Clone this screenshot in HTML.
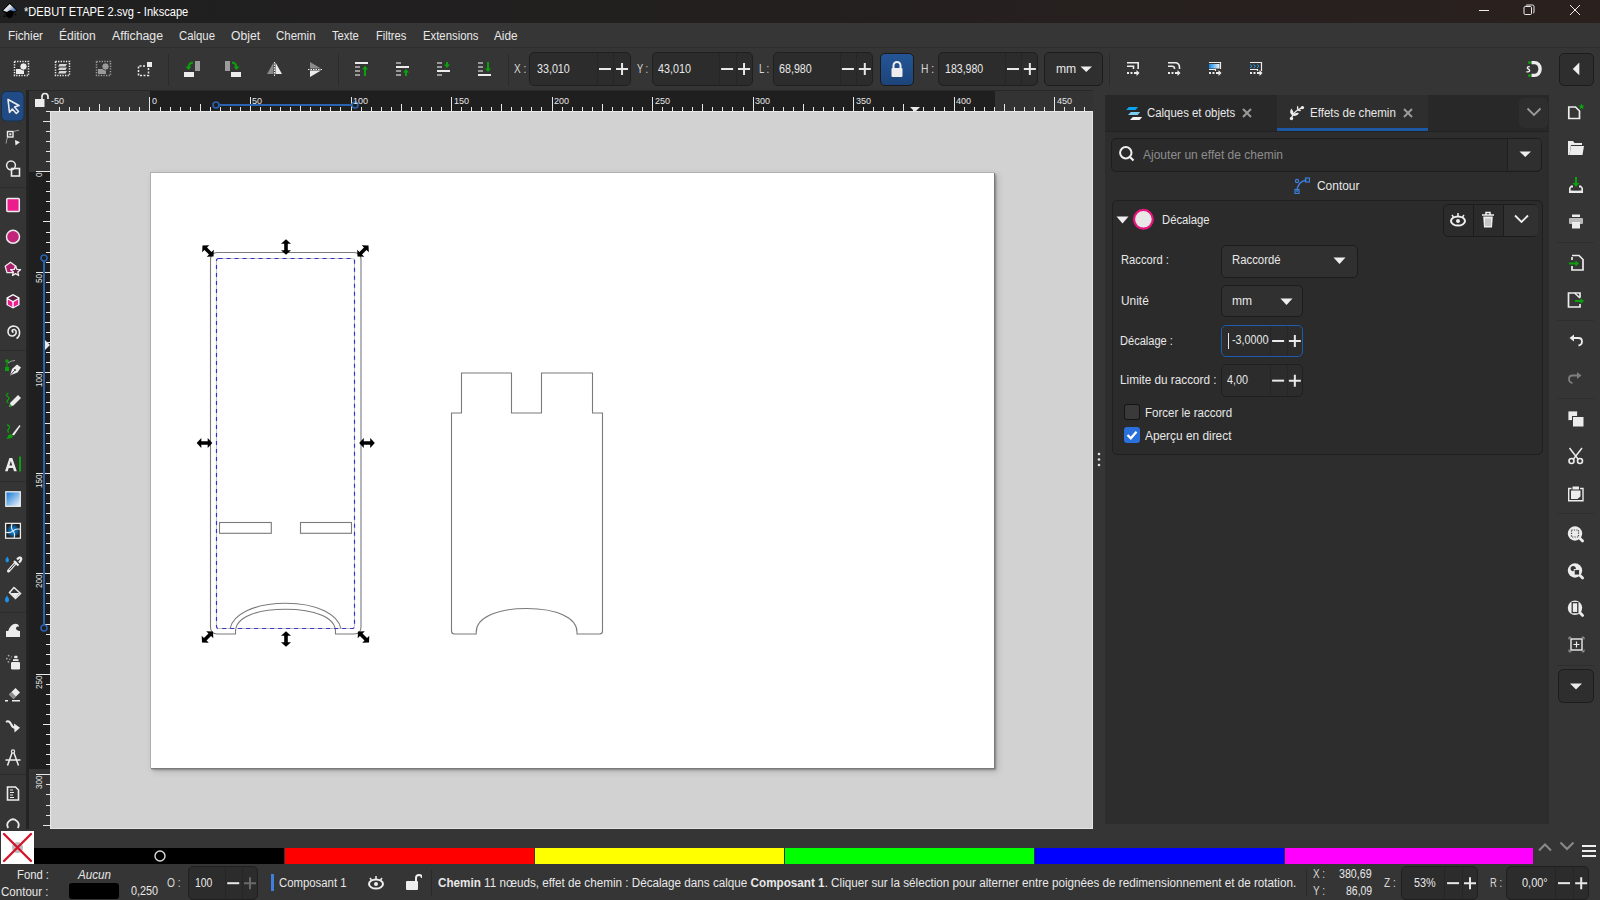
<!DOCTYPE html>
<html><head><meta charset="utf-8"><style>
html,body{margin:0;padding:0;}
body{width:1600px;height:900px;overflow:hidden;position:relative;background:#353535;font-family:"Liberation Sans",sans-serif;}
body>div{position:absolute;}
.t{position:absolute;white-space:pre;transform-origin:0 0;}
</style></head><body>
<div style="left:0px;top:0px;width:1600px;height:23px;background:linear-gradient(90deg,#202020 0%,#221f1f 40%,#2a211e 100%);"></div>
<div style="left:0px;top:23px;width:1600px;height:24px;background:#363636;"></div>
<div style="left:0px;top:47px;width:1600px;height:1px;background:#2e2e2e;"></div>
<div style="left:0px;top:48px;width:1600px;height:42px;background:#353535;"></div>
<div style="left:0px;top:90px;width:27px;height:738px;background:#353535;"></div>
<div style="left:26px;top:90px;width:3px;height:739px;background:#232323;"></div>
<div style="left:29px;top:90px;width:1064px;height:21px;background:#333333;"></div>
<div style="left:29px;top:111px;width:22px;height:718px;background:#333333;"></div>
<div style="left:150px;top:90px;width:845px;height:21px;background:#1f1f1f;"></div>
<div style="left:29px;top:172px;width:21px;height:597px;background:#1f1f1f;"></div>
<div style="left:29px;top:90px;width:1064px;height:1px;background:#282828;"></div>
<div style="left:51px;top:112px;width:1042px;height:717px;background:#d2d2d2;"></div>
<div style="left:51px;top:828px;width:1042px;height:1px;background:#e4e4e4;"></div>
<div style="left:1092px;top:112px;width:1px;height:717px;background:#e4e4e4;"></div>
<div style="left:1093px;top:90px;width:12px;height:738px;background:#353535;"></div>
<div style="left:1105px;top:95px;width:444px;height:729px;background:#2d2d2d;"></div>
<div style="left:1105px;top:95px;width:444px;height:36px;background:#282828;"></div>
<div style="left:1277px;top:95px;width:151px;height:36px;background:#2e2e2e;"></div>
<div style="left:1277px;top:128px;width:151px;height:3px;background:#1d58a5;"></div>
<div style="left:1105px;top:131px;width:444px;height:1px;background:#222222;"></div>
<div style="left:1549px;top:90px;width:51px;height:738px;background:#353535;"></div>
<div style="left:0px;top:829px;width:1600px;height:37px;background:#353535;"></div>
<div style="left:0px;top:866px;width:1600px;height:34px;background:#353535;"></div>
<div style="left:150px;top:172px;width:844px;height:596px;background:#fff;box-shadow:1px 1px 0 #7a7a7a, 2px 2px 2px rgba(0,0,0,0.3), 3px 3px 7px rgba(0,0,0,0.18);border-left:1px solid #b0b0b0;border-top:1px solid #b0b0b0;box-sizing:border-box"></div>
<svg style="position:absolute;left:0px;top:0px;" width="1100" height="830" viewBox="0 0 1100 830"><path d="M451.5 413 H461.5 V373 H511.5 V413 H541.5 V373 H592.5 V413 H602.5 V631 Q602.5 634 599.5 634 H577 V632 C577 618 557 608.5 526.6 608.5 C496 608.5 476.2 618 476.2 632 V634 H454.5 Q451.5 634 451.5 631 Z" fill="none" stroke="#7a7a7a" stroke-width="1.1"/><path d="M218 252.5 H353.5 Q361 252.5 361 260 V627 Q361 634 354 634 H335.5 V631.5 C335.5 617 314 609.3 285.5 609.3 C257 609.3 235.5 617 235.5 631.5 V634 H217.5 Q210.5 634 210.5 627 V260 Q210.5 252.5 218 252.5 Z" fill="none" stroke="#7a7a7a" stroke-width="1.1"/><rect x="216.5" y="258.5" width="138" height="370" rx="2" fill="none" stroke="#c4c4c4" stroke-width="1"/><path d="M230.1 628.5 C233 615 253 603.3 285.5 603.3 C318 603.3 338 615 340.9 628.5" fill="none" stroke="#7a7a7a" stroke-width="1.1"/><rect x="216.5" y="258.5" width="138" height="370" rx="2" fill="none" stroke="#3434c8" stroke-width="1.2" stroke-dasharray="4 4"/><rect x="219.5" y="522.5" width="51.8" height="10.8" fill="none" stroke="#7a7a7a" stroke-width="1.1"/><rect x="300.5" y="522.5" width="51" height="10.8" fill="none" stroke="#7a7a7a" stroke-width="1.1"/><path transform="translate(208 251) rotate(45)" d="M-7.8 0 L-3.2 -5 L-3.2 -1.8 L3.2 -1.8 L3.2 -5 L7.8 0 L3.2 5 L3.2 1.8 L-3.2 1.8 L-3.2 5 Z" fill="#000"/><path transform="translate(286 247) rotate(90)" d="M-7.8 0 L-3.2 -5 L-3.2 -1.8 L3.2 -1.8 L3.2 -5 L7.8 0 L3.2 5 L3.2 1.8 L-3.2 1.8 L-3.2 5 Z" fill="#000"/><path transform="translate(363 251) rotate(-45)" d="M-7.8 0 L-3.2 -5 L-3.2 -1.8 L3.2 -1.8 L3.2 -5 L7.8 0 L3.2 5 L3.2 1.8 L-3.2 1.8 L-3.2 5 Z" fill="#000"/><path transform="translate(204.5 443) rotate(0)" d="M-7.8 0 L-3.2 -5 L-3.2 -1.8 L3.2 -1.8 L3.2 -5 L7.8 0 L3.2 5 L3.2 1.8 L-3.2 1.8 L-3.2 5 Z" fill="#000"/><path transform="translate(367 443) rotate(0)" d="M-7.8 0 L-3.2 -5 L-3.2 -1.8 L3.2 -1.8 L3.2 -5 L7.8 0 L3.2 5 L3.2 1.8 L-3.2 1.8 L-3.2 5 Z" fill="#000"/><path transform="translate(207.5 637) rotate(-45)" d="M-7.8 0 L-3.2 -5 L-3.2 -1.8 L3.2 -1.8 L3.2 -5 L7.8 0 L3.2 5 L3.2 1.8 L-3.2 1.8 L-3.2 5 Z" fill="#000"/><path transform="translate(286 639) rotate(90)" d="M-7.8 0 L-3.2 -5 L-3.2 -1.8 L3.2 -1.8 L3.2 -5 L7.8 0 L3.2 5 L3.2 1.8 L-3.2 1.8 L-3.2 5 Z" fill="#000"/><path transform="translate(363.5 637) rotate(45)" d="M-7.8 0 L-3.2 -5 L-3.2 -1.8 L3.2 -1.8 L3.2 -5 L7.8 0 L3.2 5 L3.2 1.8 L-3.2 1.8 L-3.2 5 Z" fill="#000"/></svg>
<svg style="position:absolute;left:0px;top:0px;" width="1100" height="830" viewBox="0 0 1100 830"><line x1="59.5" y1="107" x2="59.5" y2="111.5" stroke="#e8e8e8" stroke-width="1"/><line x1="69.5" y1="107" x2="69.5" y2="111.5" stroke="#e8e8e8" stroke-width="1"/><line x1="79.5" y1="107" x2="79.5" y2="111.5" stroke="#e8e8e8" stroke-width="1"/><line x1="89.5" y1="107" x2="89.5" y2="111.5" stroke="#e8e8e8" stroke-width="1"/><line x1="99.5" y1="104" x2="99.5" y2="111.5" stroke="#e8e8e8" stroke-width="1"/><line x1="109.5" y1="107" x2="109.5" y2="111.5" stroke="#e8e8e8" stroke-width="1"/><line x1="119.5" y1="107" x2="119.5" y2="111.5" stroke="#e8e8e8" stroke-width="1"/><line x1="129.5" y1="107" x2="129.5" y2="111.5" stroke="#e8e8e8" stroke-width="1"/><line x1="139.5" y1="107" x2="139.5" y2="111.5" stroke="#e8e8e8" stroke-width="1"/><line x1="149.5" y1="97" x2="149.5" y2="111.5" stroke="#e8e8e8" stroke-width="1"/><line x1="160.5" y1="107" x2="160.5" y2="111.5" stroke="#e8e8e8" stroke-width="1"/><line x1="170.5" y1="107" x2="170.5" y2="111.5" stroke="#e8e8e8" stroke-width="1"/><line x1="180.5" y1="107" x2="180.5" y2="111.5" stroke="#e8e8e8" stroke-width="1"/><line x1="190.5" y1="107" x2="190.5" y2="111.5" stroke="#e8e8e8" stroke-width="1"/><line x1="200.5" y1="104" x2="200.5" y2="111.5" stroke="#e8e8e8" stroke-width="1"/><line x1="210.5" y1="107" x2="210.5" y2="111.5" stroke="#e8e8e8" stroke-width="1"/><line x1="220.5" y1="107" x2="220.5" y2="111.5" stroke="#e8e8e8" stroke-width="1"/><line x1="230.5" y1="107" x2="230.5" y2="111.5" stroke="#e8e8e8" stroke-width="1"/><line x1="240.5" y1="107" x2="240.5" y2="111.5" stroke="#e8e8e8" stroke-width="1"/><line x1="250.5" y1="97" x2="250.5" y2="111.5" stroke="#e8e8e8" stroke-width="1"/><line x1="260.5" y1="107" x2="260.5" y2="111.5" stroke="#e8e8e8" stroke-width="1"/><line x1="270.5" y1="107" x2="270.5" y2="111.5" stroke="#e8e8e8" stroke-width="1"/><line x1="280.5" y1="107" x2="280.5" y2="111.5" stroke="#e8e8e8" stroke-width="1"/><line x1="290.5" y1="107" x2="290.5" y2="111.5" stroke="#e8e8e8" stroke-width="1"/><line x1="300.5" y1="104" x2="300.5" y2="111.5" stroke="#e8e8e8" stroke-width="1"/><line x1="310.5" y1="107" x2="310.5" y2="111.5" stroke="#e8e8e8" stroke-width="1"/><line x1="320.5" y1="107" x2="320.5" y2="111.5" stroke="#e8e8e8" stroke-width="1"/><line x1="330.5" y1="107" x2="330.5" y2="111.5" stroke="#e8e8e8" stroke-width="1"/><line x1="340.5" y1="107" x2="340.5" y2="111.5" stroke="#e8e8e8" stroke-width="1"/><line x1="351.5" y1="97" x2="351.5" y2="111.5" stroke="#e8e8e8" stroke-width="1"/><line x1="361.5" y1="107" x2="361.5" y2="111.5" stroke="#e8e8e8" stroke-width="1"/><line x1="371.5" y1="107" x2="371.5" y2="111.5" stroke="#e8e8e8" stroke-width="1"/><line x1="381.5" y1="107" x2="381.5" y2="111.5" stroke="#e8e8e8" stroke-width="1"/><line x1="391.5" y1="107" x2="391.5" y2="111.5" stroke="#e8e8e8" stroke-width="1"/><line x1="401.5" y1="104" x2="401.5" y2="111.5" stroke="#e8e8e8" stroke-width="1"/><line x1="411.5" y1="107" x2="411.5" y2="111.5" stroke="#e8e8e8" stroke-width="1"/><line x1="421.5" y1="107" x2="421.5" y2="111.5" stroke="#e8e8e8" stroke-width="1"/><line x1="431.5" y1="107" x2="431.5" y2="111.5" stroke="#e8e8e8" stroke-width="1"/><line x1="441.5" y1="107" x2="441.5" y2="111.5" stroke="#e8e8e8" stroke-width="1"/><line x1="451.5" y1="97" x2="451.5" y2="111.5" stroke="#e8e8e8" stroke-width="1"/><line x1="461.5" y1="107" x2="461.5" y2="111.5" stroke="#e8e8e8" stroke-width="1"/><line x1="471.5" y1="107" x2="471.5" y2="111.5" stroke="#e8e8e8" stroke-width="1"/><line x1="481.5" y1="107" x2="481.5" y2="111.5" stroke="#e8e8e8" stroke-width="1"/><line x1="491.5" y1="107" x2="491.5" y2="111.5" stroke="#e8e8e8" stroke-width="1"/><line x1="501.5" y1="104" x2="501.5" y2="111.5" stroke="#e8e8e8" stroke-width="1"/><line x1="511.5" y1="107" x2="511.5" y2="111.5" stroke="#e8e8e8" stroke-width="1"/><line x1="521.5" y1="107" x2="521.5" y2="111.5" stroke="#e8e8e8" stroke-width="1"/><line x1="531.5" y1="107" x2="531.5" y2="111.5" stroke="#e8e8e8" stroke-width="1"/><line x1="541.5" y1="107" x2="541.5" y2="111.5" stroke="#e8e8e8" stroke-width="1"/><line x1="552.5" y1="97" x2="552.5" y2="111.5" stroke="#e8e8e8" stroke-width="1"/><line x1="562.5" y1="107" x2="562.5" y2="111.5" stroke="#e8e8e8" stroke-width="1"/><line x1="572.5" y1="107" x2="572.5" y2="111.5" stroke="#e8e8e8" stroke-width="1"/><line x1="582.5" y1="107" x2="582.5" y2="111.5" stroke="#e8e8e8" stroke-width="1"/><line x1="592.5" y1="107" x2="592.5" y2="111.5" stroke="#e8e8e8" stroke-width="1"/><line x1="602.5" y1="104" x2="602.5" y2="111.5" stroke="#e8e8e8" stroke-width="1"/><line x1="612.5" y1="107" x2="612.5" y2="111.5" stroke="#e8e8e8" stroke-width="1"/><line x1="622.5" y1="107" x2="622.5" y2="111.5" stroke="#e8e8e8" stroke-width="1"/><line x1="632.5" y1="107" x2="632.5" y2="111.5" stroke="#e8e8e8" stroke-width="1"/><line x1="642.5" y1="107" x2="642.5" y2="111.5" stroke="#e8e8e8" stroke-width="1"/><line x1="652.5" y1="97" x2="652.5" y2="111.5" stroke="#e8e8e8" stroke-width="1"/><line x1="662.5" y1="107" x2="662.5" y2="111.5" stroke="#e8e8e8" stroke-width="1"/><line x1="672.5" y1="107" x2="672.5" y2="111.5" stroke="#e8e8e8" stroke-width="1"/><line x1="682.5" y1="107" x2="682.5" y2="111.5" stroke="#e8e8e8" stroke-width="1"/><line x1="692.5" y1="107" x2="692.5" y2="111.5" stroke="#e8e8e8" stroke-width="1"/><line x1="702.5" y1="104" x2="702.5" y2="111.5" stroke="#e8e8e8" stroke-width="1"/><line x1="712.5" y1="107" x2="712.5" y2="111.5" stroke="#e8e8e8" stroke-width="1"/><line x1="722.5" y1="107" x2="722.5" y2="111.5" stroke="#e8e8e8" stroke-width="1"/><line x1="732.5" y1="107" x2="732.5" y2="111.5" stroke="#e8e8e8" stroke-width="1"/><line x1="743.5" y1="107" x2="743.5" y2="111.5" stroke="#e8e8e8" stroke-width="1"/><line x1="753.5" y1="97" x2="753.5" y2="111.5" stroke="#e8e8e8" stroke-width="1"/><line x1="763.5" y1="107" x2="763.5" y2="111.5" stroke="#e8e8e8" stroke-width="1"/><line x1="773.5" y1="107" x2="773.5" y2="111.5" stroke="#e8e8e8" stroke-width="1"/><line x1="783.5" y1="107" x2="783.5" y2="111.5" stroke="#e8e8e8" stroke-width="1"/><line x1="793.5" y1="107" x2="793.5" y2="111.5" stroke="#e8e8e8" stroke-width="1"/><line x1="803.5" y1="104" x2="803.5" y2="111.5" stroke="#e8e8e8" stroke-width="1"/><line x1="813.5" y1="107" x2="813.5" y2="111.5" stroke="#e8e8e8" stroke-width="1"/><line x1="823.5" y1="107" x2="823.5" y2="111.5" stroke="#e8e8e8" stroke-width="1"/><line x1="833.5" y1="107" x2="833.5" y2="111.5" stroke="#e8e8e8" stroke-width="1"/><line x1="843.5" y1="107" x2="843.5" y2="111.5" stroke="#e8e8e8" stroke-width="1"/><line x1="853.5" y1="97" x2="853.5" y2="111.5" stroke="#e8e8e8" stroke-width="1"/><line x1="863.5" y1="107" x2="863.5" y2="111.5" stroke="#e8e8e8" stroke-width="1"/><line x1="873.5" y1="107" x2="873.5" y2="111.5" stroke="#e8e8e8" stroke-width="1"/><line x1="883.5" y1="107" x2="883.5" y2="111.5" stroke="#e8e8e8" stroke-width="1"/><line x1="893.5" y1="107" x2="893.5" y2="111.5" stroke="#e8e8e8" stroke-width="1"/><line x1="903.5" y1="104" x2="903.5" y2="111.5" stroke="#e8e8e8" stroke-width="1"/><line x1="913.5" y1="107" x2="913.5" y2="111.5" stroke="#e8e8e8" stroke-width="1"/><line x1="923.5" y1="107" x2="923.5" y2="111.5" stroke="#e8e8e8" stroke-width="1"/><line x1="934.5" y1="107" x2="934.5" y2="111.5" stroke="#e8e8e8" stroke-width="1"/><line x1="944.5" y1="107" x2="944.5" y2="111.5" stroke="#e8e8e8" stroke-width="1"/><line x1="954.5" y1="97" x2="954.5" y2="111.5" stroke="#e8e8e8" stroke-width="1"/><line x1="964.5" y1="107" x2="964.5" y2="111.5" stroke="#e8e8e8" stroke-width="1"/><line x1="974.5" y1="107" x2="974.5" y2="111.5" stroke="#e8e8e8" stroke-width="1"/><line x1="984.5" y1="107" x2="984.5" y2="111.5" stroke="#e8e8e8" stroke-width="1"/><line x1="994.5" y1="107" x2="994.5" y2="111.5" stroke="#e8e8e8" stroke-width="1"/><line x1="1004.5" y1="104" x2="1004.5" y2="111.5" stroke="#e8e8e8" stroke-width="1"/><line x1="1014.5" y1="107" x2="1014.5" y2="111.5" stroke="#e8e8e8" stroke-width="1"/><line x1="1024.5" y1="107" x2="1024.5" y2="111.5" stroke="#e8e8e8" stroke-width="1"/><line x1="1034.5" y1="107" x2="1034.5" y2="111.5" stroke="#e8e8e8" stroke-width="1"/><line x1="1044.5" y1="107" x2="1044.5" y2="111.5" stroke="#e8e8e8" stroke-width="1"/><line x1="1054.5" y1="97" x2="1054.5" y2="111.5" stroke="#e8e8e8" stroke-width="1"/><line x1="1064.5" y1="107" x2="1064.5" y2="111.5" stroke="#e8e8e8" stroke-width="1"/><line x1="1074.5" y1="107" x2="1074.5" y2="111.5" stroke="#e8e8e8" stroke-width="1"/><line x1="1084.5" y1="107" x2="1084.5" y2="111.5" stroke="#e8e8e8" stroke-width="1"/><line x1="50" y1="111.5" x2="1093" y2="111.5" stroke="#e8e8e8" stroke-width="1"/><line x1="46" y1="111.5" x2="51" y2="111.5" stroke="#e8e8e8" stroke-width="1"/><line x1="43" y1="121.5" x2="51" y2="121.5" stroke="#e8e8e8" stroke-width="1"/><line x1="46" y1="131.5" x2="51" y2="131.5" stroke="#e8e8e8" stroke-width="1"/><line x1="46" y1="141.5" x2="51" y2="141.5" stroke="#e8e8e8" stroke-width="1"/><line x1="46" y1="151.5" x2="51" y2="151.5" stroke="#e8e8e8" stroke-width="1"/><line x1="46" y1="161.5" x2="51" y2="161.5" stroke="#e8e8e8" stroke-width="1"/><line x1="36" y1="171.5" x2="51" y2="171.5" stroke="#e8e8e8" stroke-width="1"/><line x1="46" y1="181.5" x2="51" y2="181.5" stroke="#e8e8e8" stroke-width="1"/><line x1="46" y1="191.5" x2="51" y2="191.5" stroke="#e8e8e8" stroke-width="1"/><line x1="46" y1="201.5" x2="51" y2="201.5" stroke="#e8e8e8" stroke-width="1"/><line x1="46" y1="211.5" x2="51" y2="211.5" stroke="#e8e8e8" stroke-width="1"/><line x1="43" y1="221.5" x2="51" y2="221.5" stroke="#e8e8e8" stroke-width="1"/><line x1="46" y1="232.5" x2="51" y2="232.5" stroke="#e8e8e8" stroke-width="1"/><line x1="46" y1="242.5" x2="51" y2="242.5" stroke="#e8e8e8" stroke-width="1"/><line x1="46" y1="252.5" x2="51" y2="252.5" stroke="#e8e8e8" stroke-width="1"/><line x1="46" y1="262.5" x2="51" y2="262.5" stroke="#e8e8e8" stroke-width="1"/><line x1="36" y1="272.5" x2="51" y2="272.5" stroke="#e8e8e8" stroke-width="1"/><line x1="46" y1="282.5" x2="51" y2="282.5" stroke="#e8e8e8" stroke-width="1"/><line x1="46" y1="292.5" x2="51" y2="292.5" stroke="#e8e8e8" stroke-width="1"/><line x1="46" y1="302.5" x2="51" y2="302.5" stroke="#e8e8e8" stroke-width="1"/><line x1="46" y1="312.5" x2="51" y2="312.5" stroke="#e8e8e8" stroke-width="1"/><line x1="43" y1="322.5" x2="51" y2="322.5" stroke="#e8e8e8" stroke-width="1"/><line x1="46" y1="332.5" x2="51" y2="332.5" stroke="#e8e8e8" stroke-width="1"/><line x1="46" y1="342.5" x2="51" y2="342.5" stroke="#e8e8e8" stroke-width="1"/><line x1="46" y1="352.5" x2="51" y2="352.5" stroke="#e8e8e8" stroke-width="1"/><line x1="46" y1="362.5" x2="51" y2="362.5" stroke="#e8e8e8" stroke-width="1"/><line x1="36" y1="372.5" x2="51" y2="372.5" stroke="#e8e8e8" stroke-width="1"/><line x1="46" y1="382.5" x2="51" y2="382.5" stroke="#e8e8e8" stroke-width="1"/><line x1="46" y1="392.5" x2="51" y2="392.5" stroke="#e8e8e8" stroke-width="1"/><line x1="46" y1="402.5" x2="51" y2="402.5" stroke="#e8e8e8" stroke-width="1"/><line x1="46" y1="412.5" x2="51" y2="412.5" stroke="#e8e8e8" stroke-width="1"/><line x1="43" y1="423.5" x2="51" y2="423.5" stroke="#e8e8e8" stroke-width="1"/><line x1="46" y1="433.5" x2="51" y2="433.5" stroke="#e8e8e8" stroke-width="1"/><line x1="46" y1="443.5" x2="51" y2="443.5" stroke="#e8e8e8" stroke-width="1"/><line x1="46" y1="453.5" x2="51" y2="453.5" stroke="#e8e8e8" stroke-width="1"/><line x1="46" y1="463.5" x2="51" y2="463.5" stroke="#e8e8e8" stroke-width="1"/><line x1="36" y1="473.5" x2="51" y2="473.5" stroke="#e8e8e8" stroke-width="1"/><line x1="46" y1="483.5" x2="51" y2="483.5" stroke="#e8e8e8" stroke-width="1"/><line x1="46" y1="493.5" x2="51" y2="493.5" stroke="#e8e8e8" stroke-width="1"/><line x1="46" y1="503.5" x2="51" y2="503.5" stroke="#e8e8e8" stroke-width="1"/><line x1="46" y1="513.5" x2="51" y2="513.5" stroke="#e8e8e8" stroke-width="1"/><line x1="43" y1="523.5" x2="51" y2="523.5" stroke="#e8e8e8" stroke-width="1"/><line x1="46" y1="533.5" x2="51" y2="533.5" stroke="#e8e8e8" stroke-width="1"/><line x1="46" y1="543.5" x2="51" y2="543.5" stroke="#e8e8e8" stroke-width="1"/><line x1="46" y1="553.5" x2="51" y2="553.5" stroke="#e8e8e8" stroke-width="1"/><line x1="46" y1="563.5" x2="51" y2="563.5" stroke="#e8e8e8" stroke-width="1"/><line x1="36" y1="573.5" x2="51" y2="573.5" stroke="#e8e8e8" stroke-width="1"/><line x1="46" y1="583.5" x2="51" y2="583.5" stroke="#e8e8e8" stroke-width="1"/><line x1="46" y1="593.5" x2="51" y2="593.5" stroke="#e8e8e8" stroke-width="1"/><line x1="46" y1="603.5" x2="51" y2="603.5" stroke="#e8e8e8" stroke-width="1"/><line x1="46" y1="614.5" x2="51" y2="614.5" stroke="#e8e8e8" stroke-width="1"/><line x1="43" y1="624.5" x2="51" y2="624.5" stroke="#e8e8e8" stroke-width="1"/><line x1="46" y1="634.5" x2="51" y2="634.5" stroke="#e8e8e8" stroke-width="1"/><line x1="46" y1="644.5" x2="51" y2="644.5" stroke="#e8e8e8" stroke-width="1"/><line x1="46" y1="654.5" x2="51" y2="654.5" stroke="#e8e8e8" stroke-width="1"/><line x1="46" y1="664.5" x2="51" y2="664.5" stroke="#e8e8e8" stroke-width="1"/><line x1="36" y1="674.5" x2="51" y2="674.5" stroke="#e8e8e8" stroke-width="1"/><line x1="46" y1="684.5" x2="51" y2="684.5" stroke="#e8e8e8" stroke-width="1"/><line x1="46" y1="694.5" x2="51" y2="694.5" stroke="#e8e8e8" stroke-width="1"/><line x1="46" y1="704.5" x2="51" y2="704.5" stroke="#e8e8e8" stroke-width="1"/><line x1="46" y1="714.5" x2="51" y2="714.5" stroke="#e8e8e8" stroke-width="1"/><line x1="43" y1="724.5" x2="51" y2="724.5" stroke="#e8e8e8" stroke-width="1"/><line x1="46" y1="734.5" x2="51" y2="734.5" stroke="#e8e8e8" stroke-width="1"/><line x1="46" y1="744.5" x2="51" y2="744.5" stroke="#e8e8e8" stroke-width="1"/><line x1="46" y1="754.5" x2="51" y2="754.5" stroke="#e8e8e8" stroke-width="1"/><line x1="46" y1="764.5" x2="51" y2="764.5" stroke="#e8e8e8" stroke-width="1"/><line x1="36" y1="774.5" x2="51" y2="774.5" stroke="#e8e8e8" stroke-width="1"/><line x1="46" y1="784.5" x2="51" y2="784.5" stroke="#e8e8e8" stroke-width="1"/><line x1="46" y1="794.5" x2="51" y2="794.5" stroke="#e8e8e8" stroke-width="1"/><line x1="46" y1="805.5" x2="51" y2="805.5" stroke="#e8e8e8" stroke-width="1"/><line x1="46" y1="815.5" x2="51" y2="815.5" stroke="#e8e8e8" stroke-width="1"/><line x1="43" y1="825.5" x2="51" y2="825.5" stroke="#e8e8e8" stroke-width="1"/><line x1="50.5" y1="111" x2="50.5" y2="829" stroke="#e8e8e8" stroke-width="1"/><line x1="216" y1="105" x2="355" y2="105" stroke="#2a62b0" stroke-width="2"/><circle cx="216" cy="105" r="3" fill="#1f1f1f" stroke="#2a62b0" stroke-width="1.6"/><circle cx="355" cy="105" r="3" fill="#1f1f1f" stroke="#2a62b0" stroke-width="1.6"/><line x1="44" y1="258" x2="44" y2="628" stroke="#2a62b0" stroke-width="2"/><circle cx="44" cy="258" r="3" fill="#1f1f1f" stroke="#2a62b0" stroke-width="1.6"/><circle cx="44" cy="628" r="3" fill="#1f1f1f" stroke="#2a62b0" stroke-width="1.6"/><path d="M910 107 H920 L916 111 V112 H914 V111 Z" fill="#e8e8e8"/><path d="M45 340 V350 L50 345 Z" fill="#e8e8e8"/></svg>
<div class="t" style="left:51.42px;top:96px;font-size:9.5px;line-height:9.5px;color:#e6e6e6;transform:scaleX(0.95)">-50</div>
<div class="t" style="left:151.95px;top:96px;font-size:9.5px;line-height:9.5px;color:#e6e6e6;transform:scaleX(0.95)">0</div>
<div class="t" style="left:252.47px;top:96px;font-size:9.5px;line-height:9.5px;color:#e6e6e6;transform:scaleX(0.95)">50</div>
<div class="t" style="left:353.00px;top:96px;font-size:9.5px;line-height:9.5px;color:#e6e6e6;transform:scaleX(0.95)">100</div>
<div class="t" style="left:453.52px;top:96px;font-size:9.5px;line-height:9.5px;color:#e6e6e6;transform:scaleX(0.95)">150</div>
<div class="t" style="left:554.05px;top:96px;font-size:9.5px;line-height:9.5px;color:#e6e6e6;transform:scaleX(0.95)">200</div>
<div class="t" style="left:654.58px;top:96px;font-size:9.5px;line-height:9.5px;color:#e6e6e6;transform:scaleX(0.95)">250</div>
<div class="t" style="left:755.10px;top:96px;font-size:9.5px;line-height:9.5px;color:#e6e6e6;transform:scaleX(0.95)">300</div>
<div class="t" style="left:855.62px;top:96px;font-size:9.5px;line-height:9.5px;color:#e6e6e6;transform:scaleX(0.95)">350</div>
<div class="t" style="left:956.15px;top:96px;font-size:9.5px;line-height:9.5px;color:#e6e6e6;transform:scaleX(0.95)">400</div>
<div class="t" style="left:1056.67px;top:96px;font-size:9.5px;line-height:9.5px;color:#e6e6e6;transform:scaleX(0.95)">450</div>
<div class="t" style="left:33.5px;top:177.49px;font-size:9.5px;line-height:9.5px;color:#e6e6e6;transform-origin:0 0;transform:rotate(-90deg) scaleX(0.85)">0</div>
<div class="t" style="left:33.5px;top:282.98px;font-size:9.5px;line-height:9.5px;color:#e6e6e6;transform-origin:0 0;transform:rotate(-90deg) scaleX(0.85)">50</div>
<div class="t" style="left:33.5px;top:387.47px;font-size:9.5px;line-height:9.5px;color:#e6e6e6;transform-origin:0 0;transform:rotate(-90deg) scaleX(0.85)">100</div>
<div class="t" style="left:33.5px;top:488.47px;font-size:9.5px;line-height:9.5px;color:#e6e6e6;transform-origin:0 0;transform:rotate(-90deg) scaleX(0.85)">150</div>
<div class="t" style="left:33.5px;top:588.47px;font-size:9.5px;line-height:9.5px;color:#e6e6e6;transform-origin:0 0;transform:rotate(-90deg) scaleX(0.85)">200</div>
<div class="t" style="left:33.5px;top:689.47px;font-size:9.5px;line-height:9.5px;color:#e6e6e6;transform-origin:0 0;transform:rotate(-90deg) scaleX(0.85)">250</div>
<div class="t" style="left:33.5px;top:789.47px;font-size:9.5px;line-height:9.5px;color:#e6e6e6;transform-origin:0 0;transform:rotate(-90deg) scaleX(0.85)">300</div>
<div class="t" style="left:23.75px;top:6px;font-size:12px;line-height:12px;color:#ffffff;transform:scaleX(0.9248);">*DEBUT ETAPE 2.svg - Inkscape</div>
<div class="t" style="left:8.00px;top:30px;font-size:12.5px;line-height:12.5px;color:#e8e8e8;transform:scaleX(0.9333);">Fichier</div>
<div class="t" style="left:59.00px;top:30px;font-size:12.5px;line-height:12.5px;color:#e8e8e8;transform:scaleX(0.9608);">Édition</div>
<div class="t" style="left:112.00px;top:30px;font-size:12.5px;line-height:12.5px;color:#e8e8e8;transform:scaleX(0.9831);">Affichage</div>
<div class="t" style="left:179.00px;top:30px;font-size:12.5px;line-height:12.5px;color:#e8e8e8;transform:scaleX(0.9085);">Calque</div>
<div class="t" style="left:231.00px;top:30px;font-size:12.5px;line-height:12.5px;color:#e8e8e8;transform:scaleX(0.9707);">Objet</div>
<div class="t" style="left:276.00px;top:30px;font-size:12.5px;line-height:12.5px;color:#e8e8e8;transform:scaleX(0.9173);">Chemin</div>
<div class="t" style="left:332.40px;top:30px;font-size:12.5px;line-height:12.5px;color:#e8e8e8;transform:scaleX(0.8971);">Texte</div>
<div class="t" style="left:375.70px;top:30px;font-size:12.5px;line-height:12.5px;color:#e8e8e8;transform:scaleX(0.8912);">Filtres</div>
<div class="t" style="left:422.50px;top:30px;font-size:12.5px;line-height:12.5px;color:#e8e8e8;transform:scaleX(0.9063);">Extensions</div>
<div class="t" style="left:494.40px;top:30px;font-size:12.5px;line-height:12.5px;color:#e8e8e8;transform:scaleX(0.9440);">Aide</div>
<div style="left:529.4px;top:52px;width:101.30000000000007px;height:34px;background:#2c2c2c;border:1px solid #1f1f1f;border-radius:5px;box-sizing:border-box"></div>
<div style="left:596.6px;top:53px;width:1px;height:32px;background:#262626;"></div>
<div style="left:613.4px;top:53px;width:1px;height:32px;background:#262626;"></div>
<svg style="position:absolute;left:0;top:0" width="1600" height="900"><path d="M599.0 69.0 H611.0" stroke="#e8e8e8" stroke-width="2"/><path d="M616.05 69.0 H628.05 M622.05 63.0 V75.0" stroke="#e8e8e8" stroke-width="2"/></svg>
<div style="left:651.5px;top:52px;width:101.10000000000002px;height:34px;background:#2c2c2c;border:1px solid #1f1f1f;border-radius:5px;box-sizing:border-box"></div>
<div style="left:718.7px;top:53px;width:1px;height:32px;background:#262626;"></div>
<div style="left:735.5px;top:53px;width:1px;height:32px;background:#262626;"></div>
<svg style="position:absolute;left:0;top:0" width="1600" height="900"><path d="M721.1 69.0 H733.1" stroke="#e8e8e8" stroke-width="2"/><path d="M738.05 69.0 H750.05 M744.05 63.0 V75.0" stroke="#e8e8e8" stroke-width="2"/></svg>
<div style="left:772.5px;top:52px;width:100.79999999999995px;height:34px;background:#2c2c2c;border:1px solid #1f1f1f;border-radius:5px;box-sizing:border-box"></div>
<div style="left:839.5px;top:53px;width:1px;height:32px;background:#262626;"></div>
<div style="left:856.3px;top:53px;width:1px;height:32px;background:#262626;"></div>
<svg style="position:absolute;left:0;top:0" width="1600" height="900"><path d="M841.9 69.0 H853.9" stroke="#e8e8e8" stroke-width="2"/><path d="M858.8 69.0 H870.8 M864.8 63.0 V75.0" stroke="#e8e8e8" stroke-width="2"/></svg>
<div style="left:937.6px;top:52px;width:100.69999999999993px;height:34px;background:#2c2c2c;border:1px solid #1f1f1f;border-radius:5px;box-sizing:border-box"></div>
<div style="left:1004.6px;top:53px;width:1px;height:32px;background:#262626;"></div>
<div style="left:1021.4px;top:53px;width:1px;height:32px;background:#262626;"></div>
<svg style="position:absolute;left:0;top:0" width="1600" height="900"><path d="M1007.0 69.0 H1019.0" stroke="#e8e8e8" stroke-width="2"/><path d="M1023.8499999999999 69.0 H1035.85 M1029.85 63.0 V75.0" stroke="#e8e8e8" stroke-width="2"/></svg>
<div class="t" style="left:514.00px;top:63px;font-size:12.5px;line-height:12.5px;color:#d8d8d8;transform:scaleX(0.8000);">X :</div>
<div class="t" style="left:536.60px;top:63px;font-size:12.5px;line-height:12.5px;color:#e8e8e8;transform:scaleX(0.8575);">33,010</div>
<div class="t" style="left:636.90px;top:63px;font-size:12.5px;line-height:12.5px;color:#d8d8d8;transform:scaleX(0.7369);">Y :</div>
<div class="t" style="left:658.00px;top:63px;font-size:12.5px;line-height:12.5px;color:#e8e8e8;transform:scaleX(0.8601);">43,010</div>
<div class="t" style="left:758.75px;top:63px;font-size:12.5px;line-height:12.5px;color:#d8d8d8;transform:scaleX(0.7628);">L :</div>
<div class="t" style="left:779.25px;top:63px;font-size:12.5px;line-height:12.5px;color:#e8e8e8;transform:scaleX(0.8562);">68,980</div>
<div class="t" style="left:920.80px;top:63px;font-size:12.5px;line-height:12.5px;color:#d8d8d8;transform:scaleX(0.8250);">H :</div>
<div class="t" style="left:944.90px;top:63px;font-size:12.5px;line-height:12.5px;color:#e8e8e8;transform:scaleX(0.8454);">183,980</div>
<div style="left:880px;top:53px;width:34px;height:33px;background:linear-gradient(#245596,#1c447a);border:1px solid #1a1a1a;border-radius:5px;box-sizing:border-box"></div>
<svg style="position:absolute;left:889px;top:59px;" width="16" height="20" viewBox="0 0 16 20"><path d="M4.5 9 V6.5 A3.5 3.5 0 0 1 11.5 6.5 V9" fill="none" stroke="#eee" stroke-width="2"/><rect x="2.5" y="9" width="11" height="9" rx="1" fill="#eee"/></svg>
<div style="left:1044.4px;top:52px;width:59px;height:34px;background:#2f2f2f;border:1px solid #1c1c1c;border-radius:5px;box-sizing:border-box"></div>
<div class="t" style="left:1056.40px;top:63px;font-size:12.5px;line-height:12.5px;color:#e8e8e8;transform:scaleX(0.9706);">mm</div>
<svg style="position:absolute;left:1080px;top:66px;" width="13" height="7" viewBox="0 0 13 7"><path d="M0.5 0.5 H12 L6.25 6 Z" fill="#eee"/></svg>
<div style="left:168px;top:54px;width:1px;height:32px;background:#2b2b2b;"></div>
<div style="left:338px;top:54px;width:1px;height:32px;background:#2b2b2b;"></div>
<div style="left:508px;top:54px;width:1px;height:32px;background:#2b2b2b;"></div>
<div style="left:1109px;top:54px;width:1px;height:32px;background:#2b2b2b;"></div>
<div style="left:1558.5px;top:52.5px;width:35px;height:33px;background:#2e2e2e;border:1px solid #1c1c1c;border-radius:5px;box-sizing:border-box"></div>
<svg style="position:absolute;left:1571px;top:62px;" width="10" height="14" viewBox="0 0 10 14"><path d="M8.3 0.5 V13.3 L1.8 6.9 Z" fill="#eee"/></svg>
<div class="t" style="left:1146.90px;top:107px;font-size:12.5px;line-height:12.5px;color:#e8e8e8;transform:scaleX(0.9124);">Calques et objets</div>
<div class="t" style="left:1309.75px;top:107px;font-size:12.5px;line-height:12.5px;color:#e8e8e8;transform:scaleX(0.9244);">Effets de chemin</div>
<svg style="position:absolute;left:1242px;top:108px;" width="10" height="10" viewBox="0 0 10 10"><path d="M1 1 L9 9 M9 1 L1 9" stroke="#9a9a9a" stroke-width="2"/></svg>
<svg style="position:absolute;left:1403px;top:108px;" width="10" height="10" viewBox="0 0 10 10"><path d="M1 1 L9 9 M9 1 L1 9" stroke="#9a9a9a" stroke-width="2"/></svg>
<svg style="position:absolute;left:1120px;top:100px;" width="30" height="25" viewBox="0 0 30 25"><path d="M8.8 7 H18.2 L15.6 10 H6 Z" fill="#0aa2ef"/><path d="M10.8 12 H20.2 L17.6 15 H8 Z" fill="#7cccf4"/><path d="M12.8 17 H22.2 L19.6 20 H10 Z" fill="#f2f2f2"/></svg>
<svg style="position:absolute;left:1284px;top:100px;" width="24" height="24" viewBox="0 0 24 24"><circle cx="7.5" cy="18.5" r="1.7" fill="#eee"/><circle cx="18.4" cy="7.6" r="1.7" fill="#eee"/><path d="M7.8 17 Q9.5 12.5 13.5 10 Q16 8.5 18 7.8" fill="none" stroke="#eee" stroke-width="1.3"/><path d="M7.2 8.6 Q4.6 13.6 8.6 15.6 Q10.6 11.8 7.2 8.6 Z M8.6 15.6 Q13.2 17 15 13 Q10.6 12 8.6 15.6 Z M13.6 5.6 Q12 8.4 13.4 10.4 Q15.4 8 13.6 5.6 Z M13.4 10.4 Q15.8 11.8 17.4 10.8 Q15.2 8.8 13.4 10.4 Z" fill="#eee"/></svg>
<div style="left:1519px;top:98px;width:29px;height:30px;background:#2e2e2e;border-radius:5px"></div>
<svg style="position:absolute;left:1526px;top:107px;" width="16" height="10" viewBox="0 0 16 10"><path d="M1.5 1.5 L8 8 L14.5 1.5" fill="none" stroke="#9a9a9a" stroke-width="1.8"/></svg>
<div style="left:1111.3px;top:138.2px;width:431px;height:33.5px;background:#2a2a2a;border:1px solid #1d1d1d;border-bottom-width:1.5px;border-radius:5px;box-sizing:border-box"></div>
<div style="left:1508px;top:139px;width:33px;height:31px;background:#2f2f2f;border-radius:0 4px 4px 0"></div>
<div style="left:1507px;top:139px;width:1px;height:31.5px;background:#1f1f1f;"></div>
<svg style="position:absolute;left:1118px;top:145px;" width="17" height="17" viewBox="0 0 17 17"><circle cx="7.8" cy="7.8" r="5.7" fill="none" stroke="#f0f0f0" stroke-width="2"/><path d="M12 12 L15.5 15.5" stroke="#f0f0f0" stroke-width="2.2"/></svg>
<div class="t" style="left:1142.50px;top:149px;font-size:12.5px;line-height:12.5px;color:#8e8e8e;transform:scaleX(0.9610);">Ajouter un effet de chemin</div>
<svg style="position:absolute;left:1519px;top:151px;" width="13" height="7" viewBox="0 0 13 7"><path d="M0.5 0.5 H12 L6.25 6 Z" fill="#eee"/></svg>
<svg style="position:absolute;left:1294px;top:177px;" width="16" height="17" viewBox="0 0 16 17"><path d="M3 15 C3 8 6 4 12.5 3" fill="none" stroke="#3d7fdc" stroke-width="1.4"/><circle cx="3" cy="4" r="1.6" fill="none" stroke="#3d7fdc" stroke-width="1.2"/><rect x="1" y="12.5" width="4" height="4" fill="none" stroke="#3d7fdc" stroke-width="1.2"/><rect x="11.5" y="1" width="4" height="4" fill="none" stroke="#3d7fdc" stroke-width="1.2"/></svg>
<div class="t" style="left:1316.50px;top:180px;font-size:12.5px;line-height:12.5px;color:#e8e8e8;transform:scaleX(0.9551);">Contour</div>
<div style="left:1111.5px;top:199.5px;width:431px;height:255px;background:#2b2b2b;border:1px solid #1f1f1f;border-radius:5px;box-sizing:border-box"></div>
<svg style="position:absolute;left:1116px;top:216px;" width="14" height="8" viewBox="0 0 14 8"><path d="M0.5 0.5 H12.5 L6.5 7.5 Z" fill="#eee"/></svg>
<svg style="position:absolute;left:1132px;top:208px;" width="23" height="23" viewBox="0 0 23 23"><circle cx="11.4" cy="11.3" r="9.4" fill="#e8e8e8" stroke="#e8157f" stroke-width="2.2"/></svg>
<div class="t" style="left:1161.50px;top:214px;font-size:12.5px;line-height:12.5px;color:#e8e8e8;transform:scaleX(0.9013);">Décalage</div>
<div style="left:1443.3px;top:203.5px;width:95px;height:33px;background:#2b2b2b;border:1px solid #1c1c1c;border-radius:5px;box-sizing:border-box"></div>
<div style="left:1503px;top:204.5px;width:34.5px;height:31px;background:#313131;border-radius:0 4px 4px 0"></div>
<div style="left:1473px;top:204px;width:1px;height:32px;background:#1c1c1c;"></div>
<div style="left:1503px;top:204px;width:1px;height:32px;background:#1c1c1c;"></div>
<svg style="position:absolute;left:1448px;top:210px;" width="20" height="20" viewBox="0 0 20 20"><ellipse cx="10" cy="11" rx="7" ry="4.6" fill="none" stroke="#eee" stroke-width="2"/><circle cx="10" cy="11" r="2" fill="#eee"/><path d="M10 3 V6 M4 5 L5.5 7 M16 5 L14.5 7" stroke="#eee" stroke-width="1.5"/></svg>
<svg style="position:absolute;left:1479px;top:210px;" width="18" height="20" viewBox="0 0 18 20"><path d="M3 5 H15 M7 5 V2.5 H11 V5" fill="none" stroke="#eee" stroke-width="1.6"/><path d="M4.2 6.5 H13.8 L13 17.5 H5 Z" fill="#eee"/><path d="M7 8.5 V16 M9 8.5 V16 M11 8.5 V16" stroke="#8a8a8a" stroke-width="0.8"/></svg>
<svg style="position:absolute;left:1514px;top:214px;" width="15" height="10" viewBox="0 0 15 10"><path d="M1 1.5 L7.5 8 L14 1.5" fill="none" stroke="#eee" stroke-width="1.8"/></svg>
<div class="t" style="left:1120.50px;top:254px;font-size:12.5px;line-height:12.5px;color:#e8e8e8;transform:scaleX(0.8953);">Raccord :</div>
<div style="left:1220.5px;top:245px;width:137px;height:32.5px;background:#303030;border:1px solid #1c1c1c;border-radius:5px;box-sizing:border-box"></div>
<div class="t" style="left:1232.30px;top:254px;font-size:12.5px;line-height:12.5px;color:#e8e8e8;transform:scaleX(0.9084);">Raccordé</div>
<svg style="position:absolute;left:1333px;top:257px;" width="13" height="8" viewBox="0 0 13 8"><path d="M0.5 0.5 H12.5 L6.5 7 Z" fill="#eee"/></svg>
<div class="t" style="left:1120.50px;top:295px;font-size:12.5px;line-height:12.5px;color:#e8e8e8;transform:scaleX(0.9525);">Unité</div>
<div style="left:1220.5px;top:284.6px;width:82.6px;height:32.6px;background:#303030;border:1px solid #1c1c1c;border-radius:5px;box-sizing:border-box"></div>
<div class="t" style="left:1232.30px;top:295px;font-size:12.5px;line-height:12.5px;color:#e8e8e8;transform:scaleX(0.9658);">mm</div>
<svg style="position:absolute;left:1279.5px;top:297.5px;" width="13" height="8" viewBox="0 0 13 8"><path d="M0.5 0.5 H12.5 L6.5 7 Z" fill="#eee"/></svg>
<div class="t" style="left:1120.40px;top:335px;font-size:12.5px;line-height:12.5px;color:#e8e8e8;transform:scaleX(0.8854);">Décalage :</div>
<div style="left:1220.8px;top:324.7px;width:82.40000000000009px;height:32.60000000000002px;background:#2c2c2c;border:1px solid #1f5cb0;border-radius:5px;box-sizing:border-box"></div>
<div style="left:1269.7px;top:325.7px;width:1px;height:30.600000000000023px;background:#262626;"></div>
<div style="left:1286.5px;top:325.7px;width:1px;height:30.600000000000023px;background:#262626;"></div>
<svg style="position:absolute;left:0;top:0" width="1600" height="900"><path d="M1272.1 341.0 H1284.1" stroke="#e8e8e8" stroke-width="2"/><path d="M1288.85 341.0 H1300.85 M1294.85 335.0 V347.0" stroke="#e8e8e8" stroke-width="2"/></svg>
<div style="left:1231px;top:332px;width:38px;height:20px;overflow:hidden"><div class="t" style="left:1px;top:2.4px;font-size:12.5px;line-height:12.5px;color:#e8e8e8;transform-origin:0 0;transform:scaleX(0.86)">-3,000000</div></div>
<div style="left:1227.5px;top:333px;width:1px;height:16px;background:#e8e8e8;"></div>
<div class="t" style="left:1120.40px;top:374px;font-size:12.5px;line-height:12.5px;color:#e8e8e8;transform:scaleX(0.9386);">Limite du raccord :</div>
<div style="left:1220.8px;top:364.3px;width:82.40000000000009px;height:32.69999999999999px;background:#2c2c2c;border:1px solid #1f1f1f;border-radius:5px;box-sizing:border-box"></div>
<div style="left:1269.7px;top:365.3px;width:1px;height:30.69999999999999px;background:#262626;"></div>
<div style="left:1286.5px;top:365.3px;width:1px;height:30.69999999999999px;background:#262626;"></div>
<svg style="position:absolute;left:0;top:0" width="1600" height="900"><path d="M1272.1 380.65 H1284.1" stroke="#e8e8e8" stroke-width="2"/><path d="M1288.85 380.65 H1300.85 M1294.85 374.65 V386.65" stroke="#e8e8e8" stroke-width="2"/></svg>
<div class="t" style="left:1227.00px;top:374px;font-size:12.5px;line-height:12.5px;color:#e8e8e8;transform:scaleX(0.8638);">4,00</div>
<div style="left:1124.3px;top:404.4px;width:15.6px;height:15.2px;background:#3a3a3a;border:1px solid #141414;border-radius:3px;box-sizing:border-box"></div>
<div class="t" style="left:1144.50px;top:407px;font-size:12.5px;line-height:12.5px;color:#e8e8e8;transform:scaleX(0.9217);">Forcer le raccord</div>
<div style="left:1124.3px;top:427px;width:15.6px;height:16px;background:#2a70dc;border-radius:3px"></div>
<svg style="position:absolute;left:1125px;top:428px;" width="14" height="14" viewBox="0 0 14 14"><path d="M2.5 7 L5.8 10.3 L11.5 3.8" fill="none" stroke="#fff" stroke-width="2.2"/></svg>
<div class="t" style="left:1144.50px;top:430px;font-size:12.5px;line-height:12.5px;color:#e8e8e8;transform:scaleX(0.9495);">Aperçu en direct</div>
<svg style="position:absolute;left:1096px;top:452px;" width="6" height="16" viewBox="0 0 6 16"><circle cx="3" cy="2" r="1.3" fill="#ddd"/><circle cx="3" cy="7.5" r="1.3" fill="#ddd"/><circle cx="3" cy="13" r="1.3" fill="#ddd"/></svg>
<div style="left:1px;top:831px;width:33px;height:33px;background:#fff"></div>
<svg style="position:absolute;left:1px;top:831px;" width="33" height="33" viewBox="0 0 33 33"><circle cx="16.5" cy="16.5" r="5.5" fill="#bdbdbd"/><path d="M3 3 L30 30 M30 3 L3 30" stroke="#d2162e" stroke-width="2.4" stroke-linecap="round"/></svg>
<div style="left:34px;top:848px;width:250px;height:16px;background:#000000;"></div>
<div style="left:285px;top:848px;width:249px;height:16px;background:#ff0000;"></div>
<div style="left:535px;top:848px;width:249px;height:16px;background:#ffff00;"></div>
<div style="left:785px;top:848px;width:249px;height:16px;background:#00ff00;"></div>
<div style="left:1035px;top:848px;width:249px;height:16px;background:#0000ff;"></div>
<div style="left:1285px;top:848px;width:248px;height:16px;background:#ff00ff;"></div>
<svg style="position:absolute;left:153px;top:849px;" width="14" height="14" viewBox="0 0 14 14"><circle cx="7" cy="7" r="5" fill="none" stroke="#ddd" stroke-width="1.4"/></svg>
<svg style="position:absolute;left:1537px;top:842px;" width="16" height="10" viewBox="0 0 16 10"><path d="M2 8.5 L8 2.5 L14 8.5" fill="none" stroke="#8a8a8a" stroke-width="2"/></svg>
<svg style="position:absolute;left:1559px;top:841px;" width="16" height="10" viewBox="0 0 16 10"><path d="M1.5 1.5 L8 8 L14.5 1.5" fill="none" stroke="#8a8a8a" stroke-width="2"/></svg>
<svg style="position:absolute;left:1580px;top:843px;" width="17" height="15" viewBox="0 0 17 15"><path d="M2 3 H16 M2 8 H16 M2 13 H16" stroke="#eee" stroke-width="2"/></svg>
<div class="t" style="left:16.50px;top:869px;font-size:12.5px;line-height:12.5px;color:#e8e8e8;transform:scaleX(0.9030);">Fond :</div>
<div class="t" style="left:77.58px;top:869px;font-size:12.5px;line-height:12.5px;color:#e8e8e8;font-style:italic;transform:scaleX(0.9289);">Aucun</div>
<div class="t" style="left:1.00px;top:886px;font-size:12.5px;line-height:12.5px;color:#e8e8e8;transform:scaleX(0.9235);">Contour :</div>
<div style="left:69px;top:883px;width:50px;height:16px;background:#000;border-radius:3px"></div>
<div class="t" style="left:131.25px;top:885px;font-size:12.5px;line-height:12.5px;color:#e8e8e8;transform:scaleX(0.8671);">0,250</div>
<div class="t" style="left:167.40px;top:877px;font-size:12.5px;line-height:12.5px;color:#d8d8d8;transform:scaleX(0.8150);">O :</div>
<div style="left:187.6px;top:866.4px;width:70.70000000000002px;height:33.60000000000002px;background:#2c2c2c;border:1px solid #1f1f1f;border-radius:5px;box-sizing:border-box"></div>
<div style="left:224.8px;top:867.4px;width:1px;height:31.600000000000023px;background:#262626;"></div>
<div style="left:241.7px;top:867.4px;width:1px;height:31.600000000000023px;background:#262626;"></div>
<svg style="position:absolute;left:0;top:0" width="1600" height="900"><path d="M227.25 883.2 H239.25" stroke="#e8e8e8" stroke-width="2"/><path d="M244.0 883.2 H256.0 M250.0 877.2 V889.2" stroke="#6a6a6a" stroke-width="2"/></svg>
<div class="t" style="left:194.60px;top:877px;font-size:12.5px;line-height:12.5px;color:#e8e8e8;transform:scaleX(0.8335);">100</div>
<div style="left:271px;top:874px;width:3px;height:17px;background:#3d7fdc;"></div>
<div class="t" style="left:279.40px;top:877px;font-size:12.5px;line-height:12.5px;color:#e8e8e8;transform:scaleX(0.9089);">Composant 1</div>
<svg style="position:absolute;left:366px;top:874px;" width="20" height="17" viewBox="0 0 20 17"><ellipse cx="10" cy="10" rx="7" ry="4.6" fill="none" stroke="#eee" stroke-width="2"/><circle cx="10" cy="10" r="2" fill="#eee"/><path d="M10 2 V5 M4 4 L5.5 6 M16 4 L14.5 6" stroke="#eee" stroke-width="1.5"/></svg>
<svg style="position:absolute;left:404px;top:872px;" width="18" height="20" viewBox="0 0 18 20"><path d="M12 9 V6 A3 3 0 0 1 18 6" fill="none" stroke="#eee" stroke-width="2"/><rect x="2" y="9" width="12" height="9" rx="1" fill="#eee"/></svg>
<div style="left:431px;top:870px;width:1px;height:26px;background:#2a2a2a;"></div>
<div class="t" style="left:438px;top:877px;font-size:12.5px;line-height:12.5px;color:#e8e8e8;transform-origin:0 0;transform:scaleX(0.9347)"><b>Chemin</b> 11 nœuds, effet de chemin : Décalage dans calque <b>Composant 1</b>. Cliquer sur la sélection pour alterner entre poignées de redimensionnement et de rotation.</div>
<div style="left:1306px;top:870px;width:1px;height:26px;background:#2a2a2a;"></div>
<div class="t" style="left:1313.25px;top:868px;font-size:12.5px;line-height:12.5px;color:#d8d8d8;transform:scaleX(0.7869);">X :</div>
<div class="t" style="left:1339.40px;top:868px;font-size:12.5px;line-height:12.5px;color:#e8e8e8;transform:scaleX(0.8523);">380,69</div>
<div class="t" style="left:1313.25px;top:885px;font-size:12.5px;line-height:12.5px;color:#d8d8d8;transform:scaleX(0.8000);">Y :</div>
<div class="t" style="left:1345.80px;top:885px;font-size:12.5px;line-height:12.5px;color:#e8e8e8;transform:scaleX(0.8367);">86,09</div>
<div class="t" style="left:1384.40px;top:877px;font-size:12.5px;line-height:12.5px;color:#d8d8d8;transform:scaleX(0.8103);">Z :</div>
<div style="left:1401.4px;top:866.3px;width:76.89999999999986px;height:33.700000000000045px;background:#2c2c2c;border:1px solid #1f1f1f;border-radius:5px;box-sizing:border-box"></div>
<div style="left:1444.4px;top:867.3px;width:1px;height:31.700000000000045px;background:#262626;"></div>
<div style="left:1461.7px;top:867.3px;width:1px;height:31.700000000000045px;background:#262626;"></div>
<svg style="position:absolute;left:0;top:0" width="1600" height="900"><path d="M1447.0500000000002 883.15 H1459.0500000000002" stroke="#e8e8e8" stroke-width="2"/><path d="M1464.0 883.15 H1476.0 M1470.0 877.15 V889.15" stroke="#e8e8e8" stroke-width="2"/></svg>
<div class="t" style="left:1414.00px;top:877px;font-size:12.5px;line-height:12.5px;color:#e8e8e8;transform:scaleX(0.8680);">53%</div>
<div class="t" style="left:1489.60px;top:877px;font-size:12.5px;line-height:12.5px;color:#d8d8d8;transform:scaleX(0.7500);">R :</div>
<div style="left:1506.4px;top:866.3px;width:83.0px;height:33.700000000000045px;background:#2c2c2c;border:1px solid #1f1f1f;border-radius:5px;box-sizing:border-box"></div>
<div style="left:1555px;top:867.3px;width:1px;height:31.700000000000045px;background:#262626;"></div>
<div style="left:1573px;top:867.3px;width:1px;height:31.700000000000045px;background:#262626;"></div>
<svg style="position:absolute;left:0;top:0" width="1600" height="900"><path d="M1558.0 883.15 H1570.0" stroke="#e8e8e8" stroke-width="2"/><path d="M1575.2 883.15 H1587.2 M1581.2 877.15 V889.15" stroke="#e8e8e8" stroke-width="2"/></svg>
<div class="t" style="left:1522.00px;top:877px;font-size:12.5px;line-height:12.5px;color:#e8e8e8;transform:scaleX(0.8768);">0,00°</div>
<svg style="position:absolute;left:0;top:0" width="1600" height="900" viewBox="0 0 1600 900"><defs><linearGradient id="lg1" x1="0" y1="0" x2="1" y2="0.6"><stop offset="0.2" stop-color="#ffffff"/><stop offset="0.55" stop-color="#d8dde6"/><stop offset="1" stop-color="#3a66b0"/></linearGradient><linearGradient id="grad1" x1="0" y1="0" x2="1" y2="1"><stop offset="0" stop-color="#0c74d6"/><stop offset="1" stop-color="#f4f8fc"/></linearGradient><linearGradient id="grad2" x1="0" y1="0" x2="1" y2="0"><stop offset="0" stop-color="#0a86e6"/><stop offset="1" stop-color="#f0f6fc"/></linearGradient><radialGradient id="mesh" cx="0.5" cy="0.5" r="0.5"><stop offset="0" stop-color="#0a90f0"/><stop offset="0.6" stop-color="#0b5d9a"/><stop offset="1" stop-color="#1e1e1e"/></radialGradient></defs><path d="M9.7 2.8 L17.6 10.6 L14 12.8 L12.5 16.5 L9.6 18.6 L6.5 16.5 L5 13 L2 10.6 Z" fill="#000"/><circle cx="4.4" cy="16.2" r="0.9" fill="#000"/><circle cx="15.6" cy="14.6" r="0.8" fill="#000"/><path d="M9.7 4 L16.6 10.6 L13.6 11.6 Q11.5 9.8 10 10.2 Q8.5 10.6 7 12 L3.2 10.4 Z" fill="url(#lg1)"/><path d="M1479 10.5 H1489" stroke="#ececec" stroke-width="1"/><rect x="1524" y="6.5" width="7.5" height="8" rx="1.2" fill="none" stroke="#ececec" stroke-width="1"/><path d="M1526 5.5 Q1526 5 1527 5 H1532.5 Q1534 5 1534 6.5 V12 Q1534 13 1533 13" fill="none" stroke="#ececec" stroke-width="1"/><path d="M1570 5 L1580 15 M1580 5 L1570 15" stroke="#ececec" stroke-width="1"/><rect x="14.5" y="61.5" width="14" height="14" fill="none" stroke="#ececec" stroke-width="1.5" stroke-dasharray="1.3 1.3"/><rect x="16" y="69" width="8" height="5" fill="#ececec"/><circle cx="23.5" cy="66.5" r="3.6" fill="#ececec" stroke="#353535" stroke-width="0.8"/><rect x="55.5" y="61.5" width="14" height="14" fill="none" stroke="#ececec" stroke-width="1.5" stroke-dasharray="1.3 1.3"/><path d="M59.5 64 H67 L65.5 66.5 H58 Z M59.5 67.5 H67 L65.5 70 H58 Z M59.5 71 H67 L65.5 73.5 H58 Z" fill="#d6d6d6"/><rect x="96.5" y="61.5" width="14" height="14" fill="none" stroke="#9a9a9a" stroke-width="1.5" stroke-dasharray="1.3 1.3"/><rect x="98" y="69" width="8" height="5" fill="#9a9a9a"/><circle cx="105.5" cy="66.5" r="3.6" fill="#9a9a9a" stroke="#353535" stroke-width="0.8"/><path d="M138.5 75.5 V66 H146.5 M140 75.5 H148.5 V68" fill="none" stroke="#ececec" stroke-width="1.5" stroke-dasharray="2 1.5"/><rect x="147" y="62" width="5" height="5" fill="#ececec"/><rect x="195" y="61" width="5" height="10" fill="#9a9a9a"/><rect x="184" y="72" width="10" height="5" fill="#ececec"/><path d="M193 62.5 Q189 63 188.5 67" fill="none" stroke="#0aa10a" stroke-width="1.8"/><path d="M185.5 66.5 L188.5 70 L191.5 66.5 Z" fill="#0aa10a"/><rect x="225" y="61" width="5" height="10" fill="#9a9a9a"/><rect x="231" y="72" width="10" height="5" fill="#ececec"/><path d="M232 62.5 Q236 63 236.5 67" fill="none" stroke="#0aa10a" stroke-width="1.8"/><path d="M233.5 66.5 L236.5 70 L239.5 66.5 Z" fill="#0aa10a"/><path d="M273.5 62.5 V74 H267 Z" fill="#8a8a8a"/><path d="M275.5 62.5 V74 H282 Z" fill="#ececec"/><path d="M274.5 62 V76" stroke="#ececec" stroke-width="1.1" stroke-dasharray="1.5 1"/><path d="M310 68.5 H321 L310 62 Z" fill="#8a8a8a"/><path d="M310 70.5 H321 L310 77 Z" fill="#ececec"/><path d="M308 69.5 H322" stroke="#ececec" stroke-width="1.1" stroke-dasharray="1.5 1"/><rect x="355" y="66" width="5" height="2" fill="#9a9a9a"/><rect x="355" y="70" width="5" height="2" fill="#9a9a9a"/><rect x="355" y="74" width="5" height="2" fill="#9a9a9a"/><rect x="355" y="62" width="13" height="2" fill="#ececec"/><path d="M365 76 V69" stroke="#0aa10a" stroke-width="2"/><path d="M362 69.5 L365 65.5 L368 69.5 Z" fill="#0aa10a"/><rect x="396" y="62" width="5" height="2" fill="#9a9a9a"/><rect x="396" y="70" width="5" height="2" fill="#9a9a9a"/><rect x="396" y="74" width="5" height="2" fill="#9a9a9a"/><rect x="396" y="66" width="13" height="2" fill="#ececec"/><path d="M406 76 V72" stroke="#0aa10a" stroke-width="2"/><path d="M403 72.5 L406 69 L409 72.5 Z" fill="#0aa10a"/><rect x="437" y="62" width="5" height="2" fill="#9a9a9a"/><rect x="437" y="66" width="5" height="2" fill="#9a9a9a"/><rect x="437" y="74" width="5" height="2" fill="#9a9a9a"/><rect x="437" y="70" width="13" height="2" fill="#ececec"/><path d="M447 62 V65" stroke="#0aa10a" stroke-width="2"/><path d="M444 64.5 L447 68 L450 64.5 Z" fill="#0aa10a"/><rect x="478" y="62" width="5" height="2" fill="#9a9a9a"/><rect x="478" y="66" width="5" height="2" fill="#9a9a9a"/><rect x="478" y="70" width="5" height="2" fill="#9a9a9a"/><rect x="478" y="74" width="13" height="2" fill="#ececec"/><path d="M488 62 V69" stroke="#0aa10a" stroke-width="2"/><path d="M485 68.5 L488 72 L491 68.5 Z" fill="#0aa10a"/><path d="M1127 62.8 H1138.2 V69 M1127 66.3 H1133.5 V69" fill="none" stroke="#ececec" stroke-width="1.6"/><rect x="1127" y="72" width="2" height="2" fill="#ececec"/><rect x="1130.5" y="72" width="2" height="2" fill="#ececec"/><path d="M1134 73 H1137" stroke="#ececec" stroke-width="2"/><path d="M1136.5 70 L1139.5 73 L1136.5 76 Z" fill="#ececec"/><path d="M1168 62.8 H1175 Q1179.5 62.8 1179.5 67.5 V69 M1168 66.3 H1172 Q1174.5 66.3 1174.5 68.5 V69" fill="none" stroke="#ececec" stroke-width="1.6"/><rect x="1168" y="72" width="2" height="2" fill="#ececec"/><rect x="1171.5" y="72" width="2" height="2" fill="#ececec"/><path d="M1175 73 H1178" stroke="#ececec" stroke-width="2"/><path d="M1177.5 70 L1180.5 73 L1177.5 76 Z" fill="#ececec"/><path d="M1209 62.5 H1220.5 V69 M1209 69.5 H1215.5 V71" fill="none" stroke="#ececec" stroke-width="1.2"/><rect x="1209" y="64" width="10.5" height="4.5" fill="url(#grad2)"/><rect x="1209" y="72" width="2" height="2" fill="#ececec"/><rect x="1212.5" y="72" width="2" height="2" fill="#ececec"/><path d="M1216 73 H1219" stroke="#ececec" stroke-width="2"/><path d="M1218.5 70 L1221.5 73 L1218.5 76 Z" fill="#ececec"/><path d="M1250 62.5 H1261.5 V71 M1250 69.5 H1257.5 V71" fill="none" stroke="#ececec" stroke-width="1.2"/><path d="M1250 64.5 L1252 66.2 L1250 68 M1253.5 64.5 L1255.5 66.2 L1253.5 68 M1257 64.5 L1259 66.2 L1257 68" fill="none" stroke="#1e9ce6" stroke-width="1"/><rect x="1250" y="72" width="2" height="2" fill="#ececec"/><rect x="1253.5" y="72" width="2" height="2" fill="#ececec"/><path d="M1257 73 H1260" stroke="#ececec" stroke-width="2"/><path d="M1259.5 70 L1262.5 73 L1259.5 76 Z" fill="#ececec"/><path d="M1531.5 62.6 H1534.5 A5.6 6.4 0 0 1 1534.5 75.4 H1531.5" fill="none" stroke="#ececec" stroke-width="3.4"/><circle cx="1529.5" cy="62.6" r="1.5" fill="#0aa10a"/><circle cx="1529.5" cy="75.4" r="1.5" fill="#0aa10a"/><path d="M1529.8 66.8 Q1527.2 66.3 1527.4 68.3 Q1530 69.3 1529.6 71 Q1528.6 72.2 1526.4 71.6" fill="none" stroke="#ececec" stroke-width="1.3"/><rect x="1.5" y="91.5" width="22.5" height="29.5" rx="5" fill="#204b85" stroke="#15304f" stroke-width="1"/><path d="M8 99.5 L19 105.5 L14.5 107 L18.5 111.5 L16.3 113.5 L12.3 109 L9.5 112.5 Z" fill="none" stroke="#ececec" stroke-width="1.6" stroke-linejoin="round"/><rect x="7.5" y="131.5" width="5.5" height="5.5" fill="none" stroke="#ececec" stroke-width="1.4"/><rect x="9.3" y="133.3" width="2" height="2" fill="#ececec"/><path d="M14 131.5 Q16 130.5 19 130.3 M7.5 137.5 Q6.5 140 6 143.5" fill="none" stroke="#bbb" stroke-width="0.8"/><path d="M15 140 L20 142.3 L15.5 145.5 Z" fill="#ececec"/><circle cx="11" cy="165.3" r="4.4" fill="none" stroke="#ececec" stroke-width="1.5"/><rect x="11.5" y="168.5" width="8" height="7.5" fill="none" stroke="#ececec" stroke-width="1.6"/><rect x="0" y="187" width="26" height="1" fill="#2c2c2c"/><rect x="6.8" y="198.5" width="12.5" height="13" rx="1" fill="#ec1d8c" stroke="#ececec" stroke-width="1.5"/><circle cx="13" cy="236.8" r="6.5" fill="#c3237a" stroke="#ececec" stroke-width="1.5"/><path d="M10.5 262.3 L15.8 266.2 L14 272.6 L7 272.6 L5.2 266.2 Z" fill="#b01e6e" stroke="#ececec" stroke-width="1.3"/><path d="M15.60 266.10 L16.95 269.44 L20.55 269.69 L17.79 272.01 L18.66 275.51 L15.60 273.60 L12.54 275.51 L13.41 272.01 L10.65 269.69 L14.25 269.44 Z" fill="#6a1f4e" stroke="#ececec" stroke-width="1.3" stroke-linejoin="round"/><path d="M13 294 L19.5 297.5 V305 L13 308.5 L6.5 305 V297.5 Z" fill="#ffffff"/><path d="M13 295.5 L18 298.2 L13 301 L8 298.2 Z" fill="#5a2040"/><path d="M7.8 299.5 L12.3 302 V307 L7.8 304.5 Z" fill="#ec1d8c"/><path d="M18.2 299.5 L13.7 302 V307 L18.2 304.5 Z" fill="#ec1d8c"/><path d="M13.5 332.5 Q11.5 331.5 12.5 330 Q14.5 328.5 16 331 Q17 334.5 13 336 Q8.5 336.5 8 332 Q8 327 13 326 Q18.5 326 19.5 331.5 Q20 336.5 16.5 338.5" fill="none" stroke="#ececec" stroke-width="1.6"/><rect x="0" y="350" width="26" height="1" fill="#2c2c2c"/><circle cx="7" cy="361" r="1.8" fill="#0aa10a"/><path d="M7 361 V368" stroke="#0aa10a" stroke-width="1"/><rect x="5" y="367" width="4" height="4" fill="#0aa10a"/><path d="M8 363 Q11 360.5 15 360.5" fill="none" stroke="#bbb" stroke-width="0.8"/><path d="M10 375.5 L12 369 L17 364.5 L21 367.5 L17.5 372.5 Z" fill="#ececec"/><path d="M10.5 375 L14.5 370.5" stroke="#353535" stroke-width="0.9"/><circle cx="15" cy="370" r="0.9" fill="#353535"/><path d="M8.5 393 Q5 394.5 7.5 396.5 Q10.5 398 7.5 400.5 Q6 402 8.5 403" fill="none" stroke="#0aa10a" stroke-width="1.3"/><path d="M9 407 L10.5 402.5 L18 395 L21 398 L13.5 405.5 Z" fill="#ececec"/><path d="M9 407 L10 404 L12 406 Z" fill="#0aa10a"/><path d="M7 425 Q10.5 425.5 9 428.5 Q6.5 431 9 432.5" fill="none" stroke="#0aa10a" stroke-width="1.3"/><path d="M12 434.5 L19.5 425 L20.5 426 L14 435.5 Z" fill="#ececec"/><path d="M6.5 439 L8.5 435 L11 434 L13 436.5 L11.5 438 Z" fill="#0aa10a"/><path d="M5 471.3 L9.4 458 H12.3 L16.8 471.3 H14 L13 468 H8.7 L7.7 471.3 Z M9.5 465.5 H12.2 L10.85 461 Z" fill="#ececec" fill-rule="evenodd"/><rect x="19" y="456.5" width="2" height="15" fill="#0aa10a"/><rect x="0" y="481" width="26" height="1" fill="#2c2c2c"/><rect x="5.8" y="491.8" width="14.5" height="14.5" fill="url(#grad1)" stroke="#ececec" stroke-width="1.3"/><rect x="5.6" y="523.4" width="14.8" height="14.8" fill="#1e1e1e"/><circle cx="13" cy="530.8" r="7" fill="url(#mesh)"/><rect x="5.6" y="523.4" width="14.8" height="14.8" fill="none" stroke="#ececec" stroke-width="1.3"/><path d="M13 530.8 Q10.5 528 12 523.5 M13 530.8 Q15.8 528.2 20.4 529.3 M13 530.8 Q15.5 533.6 14 538.2 M13 530.8 Q10.2 533.4 5.6 532.3" fill="none" stroke="#ececec" stroke-width="1.1"/><path d="M7.2 556.5 Q5 559.5 5.5 560.8 Q6 562.5 7.2 562.5 Q8.5 562.5 9 560.8 Q9.5 559.5 7.2 556.5 Z" fill="#1e90e8"/><path d="M8.5 571 L15.5 563" stroke="#ececec" stroke-width="3" stroke-linecap="round"/><path d="M9.3 570 L15 563.5" stroke="#353535" stroke-width="1"/><path d="M14 561 L18.5 565.5 M17 559.5 Q20 556.5 21 558 Q22 559.5 19 562.5" fill="none" stroke="#ececec" stroke-width="2.2"/><path d="M14 587.5 L20.5 593.5 L15.5 598.5 L9.5 592.5 Z" fill="none" stroke="#ececec" stroke-width="1.5"/><path d="M10.5 593 L19.5 593 L15.5 598 Z" fill="#ececec"/><path d="M7 595.5 Q4.5 599 5 600.5 Q5.5 602.5 7 602.5 Q8.5 602.5 9 600.5 Q9.5 599 7 595.5 Z" fill="#1e90e8"/><rect x="0" y="612" width="26" height="1" fill="#2c2c2c"/><path d="M6 637 V631 H8.2 Q10.5 624 15.5 623.8 Q18.8 624 19 626.8 Q16.2 626 15.9 628.6 Q16.6 630.9 20 631 V637 Z" fill="#ececec"/><rect x="11" y="662" width="9" height="7.5" rx="1.2" fill="#ececec"/><rect x="13" y="659.2" width="5.5" height="1.8" fill="#ececec"/><rect x="14.2" y="655.8" width="3.3" height="2.4" rx="0.6" fill="#ececec"/><circle cx="8.6" cy="655.6" r="0.9" fill="#aaa"/><circle cx="6.8" cy="658.6" r="0.9" fill="#aaa"/><circle cx="9.8" cy="659.2" r="0.7" fill="#aaa"/><circle cx="8.4" cy="661.8" r="0.9" fill="#aaa"/><circle cx="11.5" cy="656.8" r="0.6" fill="#aaa"/><path d="M9 694.5 L15.5 688 L20 692.5 L13.5 699 Z" fill="#ececec"/><path d="M9 694.5 L11.5 692 L16 696.5 L13.5 699 Z" fill="#8a8a8a"/><path d="M5 700.8 H8 M12 700.8 H20" stroke="#ececec" stroke-width="1.5"/><path d="M6 722 Q9 720 11 724 Q13 728.5 16 727.5" fill="none" stroke="#ececec" stroke-width="2"/><path d="M14 723.5 L20 727.8 L14.5 732.5 Z" fill="#ececec"/><circle cx="13" cy="751.5" r="1.6" fill="none" stroke="#ececec" stroke-width="1.2"/><path d="M12 753 L7.5 765.5 M14 753 L18.5 765.5 M5.5 760 H20.5" fill="none" stroke="#ececec" stroke-width="1.5"/><rect x="0" y="774" width="26" height="1" fill="#2c2c2c"/><path d="M7.5 787 H15.5 L18.5 790 V800 H7.5 Z" fill="none" stroke="#ececec" stroke-width="1.6"/><path d="M10 790 H13 M10 792.5 H14 M10 795 H13 M10 797.5 H14" stroke="#ececec" stroke-width="1.1"/><path d="M8.2 828 A5.6 5.6 0 1 1 17.8 828" fill="none" stroke="#ececec" stroke-width="1.8"/><path d="M1568.8 107 H1575.5 L1579.5 111 V118.5 H1568.8 Z" fill="none" stroke="#ececec" stroke-width="1.7"/><path d="M1581.5 103.5 L1582.4 105.6 L1584.6 105.7 L1582.9 107.1 L1583.5 109.3 L1581.5 108 L1579.5 109.3 L1580.1 107.1 L1578.4 105.7 L1580.6 105.6 Z" fill="#0aa10a"/><path d="M1568 141 H1573 L1574.5 143 H1582 V145 H1571 L1569.5 155 H1568 Z" fill="#ececec"/><path d="M1571 146 H1584 L1582.5 155 H1569.5 Z" fill="#ececec"/><path d="M1576 177 V184" stroke="#0aa10a" stroke-width="2"/><path d="M1572.5 183 L1576 187 L1579.5 183 Z" fill="#0aa10a"/><path d="M1569 188 L1571 185.5 H1573 V187.5 H1571.3 L1570.6 188.5 V190.5 H1581.4 V188.5 L1580.7 187.5 H1579 V185.5 H1581 L1583 188 V193 H1569 Z" fill="#ececec"/><rect x="1573" y="189" width="6" height="1.3" fill="#353535"/><rect x="1572" y="214.5" width="8" height="2.5" fill="#ececec"/><rect x="1569" y="218" width="14" height="6" rx="1" fill="#b9b9b9"/><rect x="1572" y="222" width="8" height="6.5" fill="#ececec"/><rect x="1557" y="242" width="37" height="1" fill="#2e2e2e"/><path d="M1572 255.5 H1579 L1583 259.5 V270 H1572 V266 M1572 260 V257" fill="none" stroke="#ececec" stroke-width="1.7"/><path d="M1569 263.5 H1576" stroke="#0aa10a" stroke-width="2"/><path d="M1575.5 260.5 L1579 263.5 L1575.5 266.5 Z" fill="#0aa10a"/><path d="M1580 297.5 V293 L1576.5 293 M1576.5 293 H1568.5 V307 H1580 V304" fill="none" stroke="#ececec" stroke-width="1.7"/><path d="M1574.5 293 L1580 298" stroke="#ececec" stroke-width="1.5"/><path d="M1575 301 H1581" stroke="#0aa10a" stroke-width="2"/><path d="M1580.5 298 L1584 301 L1580.5 304 Z" fill="#0aa10a"/><rect x="1557" y="320" width="37" height="1" fill="#2e2e2e"/><path d="M1573 338 H1578.5 Q1582 338 1582 341.5 Q1582 345 1578.5 345.5" fill="none" stroke="#ececec" stroke-width="1.8"/><path d="M1574 334.5 L1569.5 338 L1574 341.5 Z" fill="#ececec"/><path d="M1578 375.5 H1572.5 Q1569 375.5 1569 379 Q1569 382.5 1572.5 383" fill="none" stroke="#7e7e7e" stroke-width="1.8"/><path d="M1577 372 L1581.5 375.5 L1577 379 Z" fill="#7e7e7e"/><rect x="1557" y="398" width="37" height="1" fill="#2e2e2e"/><rect x="1568" y="411" width="9.5" height="9.5" fill="#ececec" stroke="#353535" stroke-width="0.8"/><rect x="1572.5" y="416.5" width="11.5" height="10.5" fill="#ececec" stroke="#353535" stroke-width="1"/><path d="M1569.5 448 L1578 459 M1582 448 L1573.5 459" stroke="#ececec" stroke-width="1.5"/><circle cx="1571.5" cy="461" r="2.5" fill="none" stroke="#ececec" stroke-width="1.6"/><circle cx="1580" cy="461" r="2.5" fill="none" stroke="#ececec" stroke-width="1.6"/><path d="M1571.5 488.5 H1568.7 V500.7 H1583 V488.5 H1580" fill="none" stroke="#ececec" stroke-width="1.4"/><rect x="1572.5" y="486.5" width="6.5" height="3" fill="#ececec"/><path d="M1571 490.5 H1580.5 V496.5 L1577.5 499 H1571 Z" fill="#ececec"/><rect x="1557" y="513" width="37" height="1" fill="#2e2e2e"/><circle cx="1575" cy="533.5" r="7.2" fill="#ececec"/><path d="M1579.8 538.3 L1582.6 541.1" stroke="#ececec" stroke-width="2.8" stroke-linecap="round"/><rect x="1571.5" y="530" width="7" height="7" fill="none" stroke="#444" stroke-width="1.2" stroke-dasharray="1.2 1.2"/><circle cx="1575" cy="570.5" r="7.2" fill="#ececec"/><path d="M1579.8 575.3 L1582.6 578.1" stroke="#ececec" stroke-width="2.8" stroke-linecap="round"/><circle cx="1573.2" cy="568.6" r="2.6" fill="#353535"/><rect x="1574.2" y="569.6" width="5.4" height="5.4" fill="#353535" stroke="#ececec" stroke-width="0.9"/><circle cx="1575" cy="607.8" r="7.2" fill="#ececec"/><path d="M1579.8 612.5999999999999 L1582.6 615.4" stroke="#ececec" stroke-width="2.8" stroke-linecap="round"/><rect x="1572.2" y="602.6" width="5.6" height="10" fill="none" stroke="#353535" stroke-width="1.3"/><rect x="1571" y="639" width="11" height="11" fill="none" stroke="#ececec" stroke-width="1.4"/><path d="M1576.5 641.5 V647.5 M1573.5 644.5 H1579.5" stroke="#ececec" stroke-width="1.2"/><path d="M1569 639.5 V637.2 H1571.3 M1581.7 637.2 H1584 V639.5 M1584 649.5 V651.8 H1581.7 M1571.3 651.8 H1569 V649.5" fill="none" stroke="#bbb" stroke-width="0.8"/><rect x="1557" y="665" width="37" height="1" fill="#2e2e2e"/><rect x="1558.5" y="669.5" width="35" height="33" rx="5" fill="#2e2e2e" stroke="#1c1c1c" stroke-width="1"/><path d="M1570 683.5 H1582 L1576 689.5 Z" fill="#ececec"/><path d="M42 99 V96.5 A3 3 0 0 1 48 96.5 V99" fill="none" stroke="#ececec" stroke-width="1.7"/><rect x="35" y="99" width="9.5" height="8" fill="#ececec"/></svg>
</body></html>
